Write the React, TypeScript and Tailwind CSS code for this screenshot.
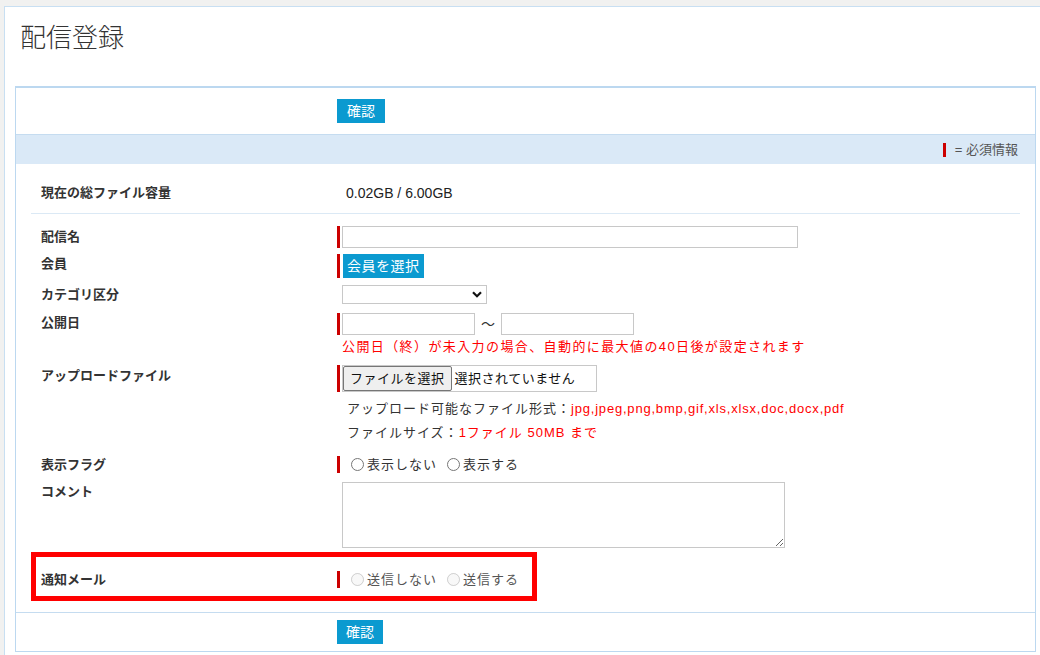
import React from "react";

const FONT = "font-['Liberation_Sans','Noto_Sans_CJK_JP',sans-serif]";

// Red marker shown in front of required fields
const Req = ({ h }: { h: string }) => <span className={`w-[3px] ${h} bg-[#cc0000] mr-[2px] shrink-0`} />;

const Blue = ({ children, className = "" }: { children: React.ReactNode; className?: string }) => (
  <button className={`bg-[#0b9ad0] text-white text-[14px] leading-[24px] h-[24px] ${className}`}>{children}</button>
);

const Label = ({ children, lh }: { children: React.ReactNode; lh: string }) => (
  <div className={`w-[306px] pl-[10px] shrink-0 text-[13px] font-bold text-[#333] ${lh}`}>{children}</div>
);

const Radio = ({ name, label, disabled }: { name: string; label: string; disabled?: boolean }) => (
  <label className="flex items-center">
    <input type="radio" name={name} disabled={disabled} className="m-0 w-[13px] h-[13px]" />
    <span className={`ml-[3px] ${disabled ? "text-[#555]" : "text-[#333]"}`}>{label}</span>
  </label>
);

export default function App() {
  return (
    <div className={`w-[1040px] h-[655px] overflow-hidden bg-[#f1f1f0] pt-[6px] pl-[4px] ${FONT}`}>
      <div className="w-[1050px] bg-white border border-[#c8dff2] pl-[10px] pb-[10px]">
        <h1 className="pt-[18px] ml-[5px] text-[26px] leading-[26px] font-light text-[#333]">配信登録</h1>

        <div className="mt-[35px] w-[1021px] border border-t-2 border-[#bcd8f0]">
          {/* top action */}
          <div className="h-[47px] pt-[11px] pl-[321px] border-b border-[#c5dcf0]">
            <Blue className="w-[48px]">確認</Blue>
          </div>

          <div className="h-[29px] bg-[#dae9f7] flex items-center justify-end pr-[17px] text-[13px] text-[#555]">
            <span className="w-[3px] h-[14px] bg-[#cc0000] mr-[9px]" />= 必須情報
          </div>

          <div className="px-[15px] pb-[11px]">
            <div className="flex pt-[21px] pb-[12px] border-b border-[#dbe9f5]">
              <Label lh="leading-[16px]">現在の総ファイル容量</Label>
              <div className="pl-[9px] text-[14px] leading-[16px] text-[#222]">0.02GB / 6.00GB</div>
            </div>

            {/* 配信名 */}
            <div className="flex items-start mt-[12px]">
              <Label lh="leading-[22px]">配信名</Label>
              <Req h="h-[22px]" />
              <input className="w-[456px] h-[22px] border border-[#c8c8c8]" />
            </div>

            {/* 会員 */}
            <div className="flex items-start mt-[6px]">
              <Label lh="leading-[20px]">会員</Label>
              <Req h="h-[24px]" />
              <Blue className="ml-[1px] px-[4px] tracking-[0.5px]">会員を選択</Blue>
            </div>

            {/* カテゴリ区分 */}
            <div className="flex items-start mt-[7px]">
              <Label lh="leading-[20px]">カテゴリ区分</Label>
              <div className="ml-[5px] relative w-[145px] h-[19px] border border-[#c8c8c8]">
                <select className="w-full h-full appearance-none bg-transparent" />
                <svg className="absolute right-[4px] top-[5px] pointer-events-none" width="10" height="7" viewBox="0 0 10 7">
                  <path d="M1 1.2 L5 5.2 L9 1.2" stroke="#111" strokeWidth="2.2" fill="none" />
                </svg>
              </div>
            </div>

            {/* 公開日 */}
            <div className="flex items-start mt-[8px]">
              <Label lh="leading-[20px]">公開日</Label>
              <div>
                <div className="flex items-center">
                  <Req h="h-[22px]" />
                  <input className="w-[133px] h-[22px] border border-[#c8c8c8]" />
                  <span className="mx-[6px] text-[14px] text-[#333]">～</span>
                  <input className="w-[133px] h-[22px] border border-[#c8c8c8]" />
                </div>
                <div className="mt-[2px] ml-[5px] text-[13px] leading-[20px] tracking-[1.4px] text-[#ff0000]">
                  公開日（終）が未入力の場合、自動的に最大値の40日後が設定されます
                </div>
              </div>
            </div>

            {/* アップロードファイル */}
            <div className="flex items-start mt-[8px]">
              <Label lh="leading-[22px]">アップロードファイル</Label>
              <div>
                <div className="flex">
                  <Req h="h-[27px]" />
                  <div className="w-[255px] h-[27px] border border-[#c8c8c8] flex items-center text-[13px] tracking-[0.5px] text-[#111]">
                    <span className="h-[25px] px-[6px] flex items-center bg-[#efefef] border border-[#767676] rounded-[2px]">ファイルを選択</span>
                    <span className="ml-[3px]">選択されていません</span>
                  </div>
                </div>
                <div className="mt-[5px] ml-[10px] text-[13px] leading-[24px] tracking-[1px] text-[#333]">
                  <div>
                    アップロード可能なファイル形式：<span className="text-[#ff0000] tracking-[0.8px]">jpg,jpeg,png,bmp,gif,xls,xlsx,doc,docx,pdf</span>
                  </div>
                  <div>
                    ファイルサイズ：<span className="text-[#ff0000]">1ファイル 50MB まで</span>
                  </div>
                </div>
              </div>
            </div>

            {/* 表示フラグ */}
            <div className="flex items-start mt-[11px]">
              <Label lh="leading-[17px]">表示フラグ</Label>
              <Req h="h-[17px]" />
              <div className="ml-[9px] flex gap-[10px] text-[13px] leading-[17px] tracking-[1px]">
                <Radio name="disp" label="表示しない" />
                <Radio name="disp" label="表示する" />
              </div>
            </div>

            {/* コメント */}
            <div className="flex items-start mt-[9px]">
              <Label lh="leading-[20px]">コメント</Label>
              <textarea className="ml-[5px] w-[443px] h-[66px] border border-[#c8c8c8]" />
            </div>

            {/* 通知メール */}
            <div className="mt-[4px] w-[506px] border-[5px] border-[#ff0000] pt-[14px] pb-[8px] flex items-center">
              <div className="w-[301px] pl-[5px] shrink-0 text-[13px] font-bold text-[#333] leading-[17px]">通知メール</div>
              <Req h="h-[17px]" />
              <div className="ml-[9px] flex gap-[10px] text-[13px] leading-[17px] tracking-[1px]">
                <Radio name="mail" label="送信しない" disabled />
                <Radio name="mail" label="送信する" disabled />
              </div>
            </div>
          </div>

          {/* bottom action */}
          <div className="border-t border-[#c5dcf0] pt-[7px] pb-[7px] pl-[321px]">
            <Blue className="w-[46px]">確認</Blue>
          </div>
        </div>
      </div>
    </div>
  );
}
